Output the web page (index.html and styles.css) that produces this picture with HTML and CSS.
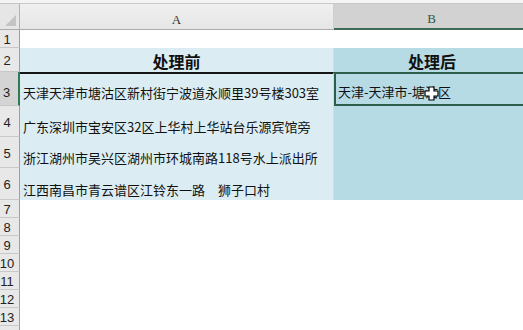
FILE: index.html
```html
<!DOCTYPE html>
<html lang="zh-CN">
<head>
    <meta charset="UTF-8">
    <title>处理前 / 处理后</title>
    <link rel="stylesheet" href="styles.css">
</head>
<body>
    <div class="topbar"></div>
    <div class="sheet">
        <!-- column headers -->
        <div class="corner"><span class="tri"></span></div>
        <div class="colhead">A</div>
        <div class="colhead sel">B</div>

        <div class="rowhead">1</div>
        <div class="cell"></div>
        <div class="cell"></div>

        <div class="rowhead">2</div>
        <div class="cell a title">处理前</div>
        <div class="cell b title">处理后</div>

        <div class="rowhead cur">3</div>
        <div class="cell a first">天津天津市塘沽区新村街宁波道永顺里39号楼303室</div>
        <div class="cell b active">天津-天津市-塘沽区</div>

        <div class="rowhead">4</div>
        <div class="cell a">广东深圳市宝安区32区上华村上华站台乐源宾馆旁</div>
        <div class="cell b"></div>

        <div class="rowhead">5</div>
        <div class="cell a">浙江湖州市吴兴区湖州市环城南路118号水上派出所</div>
        <div class="cell b"></div>

        <div class="rowhead">6</div>
        <div class="cell a">江西南昌市青云谱区江铃东一路　狮子口村</div>
        <div class="cell b"></div>

        <div class="rowhead">7</div><div class="cell"></div><div class="cell"></div>
        <div class="rowhead">8</div><div class="cell"></div><div class="cell"></div>
        <div class="rowhead">9</div><div class="cell"></div><div class="cell"></div>
        <div class="rowhead">10</div><div class="cell"></div><div class="cell"></div>
        <div class="rowhead">11</div><div class="cell"></div><div class="cell"></div>
        <div class="rowhead">12</div><div class="cell"></div><div class="cell"></div>
        <div class="rowhead">13</div><div class="cell"></div><div class="cell"></div>
        <div class="rowhead"></div><div class="cell"></div><div class="cell"></div>
    </div>

    <!-- excel selection cursor -->
    <svg class="pointer" width="15" height="15" viewBox="0 0 15 15">
        <path d="M5 1h5v4h4v5h-4v4H5v-4H1V5h4z" fill="#fff" stroke="#000" stroke-width="1.2"/>
    </svg>
</body>
</html>
```

FILE: styles.css
```css
* {
    margin: 0;
    padding: 0;
    box-sizing: border-box;
}
html, body {
    width: 100%;
    height: 100%;
    overflow: hidden;
    background: #fff;
}
body {
    position: relative;
    font-family: "Noto Sans CJK SC", "Liberation Sans", sans-serif;
    color: #111;
}
.topbar {
    height: 4px;
    background: #f4f4f4;
    border-bottom: 1px solid #c8c8c8;
}
.sheet {
    display: grid;
    grid-template-columns: 20px 314px 196px;
    grid-template-rows: 26px 18px 24px 34px 31px 31px 32px repeat(8, 18px);
    width: 530px;
}
.corner {
    position: relative;
    background: #e6e6e6;
    border-right: 1px solid #b4b4b4;
    border-bottom: 1px solid #ababab;
}
.corner .tri {
    position: absolute;
    right: 3px;
    bottom: 3px;
    width: 0;
    height: 0;
    border-left: 11px solid transparent;
    border-bottom: 11px solid #c4c4c4;
}
.colhead {
    display: flex;
    align-items: flex-end;
    justify-content: center;
    padding-bottom: 1px;
    background: linear-gradient(#f0f0f0, #e6e6e6);
    border-bottom: 1px solid #ababab;
    border-right: 1px solid #cfcfcf;
    font-family: "Liberation Serif", serif;
    font-size: 13px;
    color: #333;
}
.colhead.sel {
    background: #d2d2d2;
    border-bottom: 2px solid #3d6b57;
    color: #2a5a45;
}
.rowhead {
    display: flex;
    align-items: center;
    justify-content: center;
    padding: 2px 5px 0 0;
    background: #e8e8e8;
    border-right: 1px solid #9e9e9e;
    border-bottom: 1px solid #c8c8c8;
    font-family: "Liberation Sans", sans-serif;
    font-size: 13px;
    color: #222;
}
.rowhead.cur {
    background: #d4d4d4;
    border-right: 2px solid #2f7a55;
    padding-top: 8px;
}
.cell {
    display: flex;
    align-items: flex-end;
    padding: 0 3px 1px;
    font-size: 13px;
    white-space: nowrap;
    overflow: hidden;
    line-height: 19px;
}
.cell.a {
    background: #dbedf3;
    border-right: 1px solid #c9e0e8;
}
.cell.b {
    background: #b6dbe5;
}
.title {
    justify-content: center;
    font-size: 16px;
    font-weight: bold;
    line-height: 22px;
    padding-bottom: 0;
}
.cell.first {
    border-top: 2px solid #151515;
    padding-bottom: 4px;
}
.cell.active {
    border: 2px solid #2c5e4a;
    padding: 0 3px 3px 2px;
}
.pointer {
    position: absolute;
    left: 424px;
    top: 86px;
}
```
